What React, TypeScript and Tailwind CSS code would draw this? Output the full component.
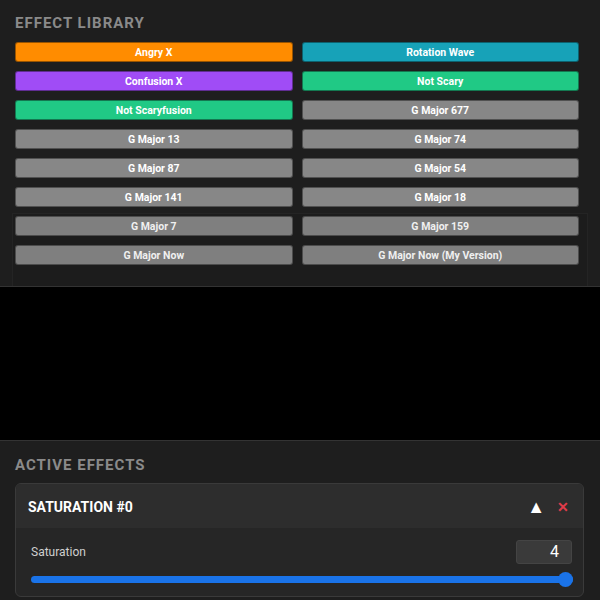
import React from "react";

const effects: { name: string; color: string }[] = [
  { name: "Angry X", color: "bg-[#ff8c00]" },
  { name: "Rotation Wave", color: "bg-[#17a2b8]" },
  { name: "Confusion X", color: "bg-[#a04cf6]" },
  { name: "Not Scary", color: "bg-[#20c985]" },
  { name: "Not Scaryfusion", color: "bg-[#20c985]" },
  { name: "G Major 677", color: "bg-[#878787]" },
  { name: "G Major 13", color: "bg-[#878787]" },
  { name: "G Major 74", color: "bg-[#878787]" },
  { name: "G Major 87", color: "bg-[#878787]" },
  { name: "G Major 54", color: "bg-[#878787]" },
  { name: "G Major 141", color: "bg-[#878787]" },
  { name: "G Major 18", color: "bg-[#878787]" },
  { name: "G Major 7", color: "bg-[#878787]" },
  { name: "G Major 159", color: "bg-[#878787]" },
  { name: "G Major Now", color: "bg-[#878787]" },
  { name: "G Major Now (My Version)", color: "bg-[#878787]" },
];

export default function App() {
  return (
    <div
      className="w-[600px] h-[600px] bg-black flex flex-col overflow-hidden"
      style={{ fontFamily: "Roboto, 'Liberation Sans', sans-serif" }}
    >
      {/* Effect library */}
      <div className="relative h-[287px] bg-[#1e1e1e] border-b border-[#333] px-[15px] pt-[13px]">
        <h2 className="text-[15px] leading-[20px] font-bold tracking-[1px] text-[#8a8a8a]">EFFECT LIBRARY</h2>
        <div className="mt-[9px] grid grid-cols-2 gap-x-[9px] gap-y-[9px] pr-[6px]">
          {effects.map((e) => (
            <button
              key={e.name}
              className={`h-[20px] pt-[2px] rounded-[3px] border border-black/40 text-[10.5px] font-bold text-white leading-none ${e.color}`}
            >
              {e.name}
            </button>
          ))}
        </div>
        <div className="pointer-events-none absolute left-[12px] right-[12px] top-[213px] bottom-0 border-x border-t border-white/[0.04] bg-black/[0.06]" />
      </div>

      <div className="flex-1" />

      {/* Active effects */}
      <div className="h-[160px] bg-[#1e1e1e] border-t border-[#333] px-[15px] pt-[14px]">
        <h2 className="text-[15px] leading-[20px] font-bold tracking-[1px] text-[#8a8a8a]">ACTIVE EFFECTS</h2>
        <div className="mt-[8px] mr-[1px] rounded-[6px] border border-[#3a3a3a] bg-[#262626] overflow-hidden">
          <div className="h-[44px] pt-[2px] bg-[#2d2d2d] flex items-center px-[12px]">
            <span className="text-[14px] font-bold text-white">SATURATION #0</span>
            <div className="ml-auto flex items-center gap-[12px] pr-[2px]">
              <span className="text-[18px] text-white leading-none">▲</span>
              <span className="text-[14px] font-bold text-[#e03c4a] leading-none">✕</span>
            </div>
          </div>
          <div className="pl-[15px] pr-[10px] pt-[12px] pb-[10px]">
            <div className="flex items-center">
              <span className="text-[12px] text-[#cfcfcf]">Saturation</span>
              <div className="ml-auto w-[56px] h-[24px] rounded-[3px] bg-[#3a3a3a] border border-[#444] flex items-center justify-end pr-[12px] text-[16px] text-white mr-[1px]">
                4
              </div>
            </div>
            <div className="relative mt-[8px] h-[14px] flex items-center">
              <div className="w-full h-[7px] rounded-full bg-[#1a73e8]" />
              <div className="absolute right-0 w-[15px] h-[15px] rounded-full bg-[#1a73e8]" />
            </div>
          </div>
        </div>
      </div>
    </div>
  );
}
